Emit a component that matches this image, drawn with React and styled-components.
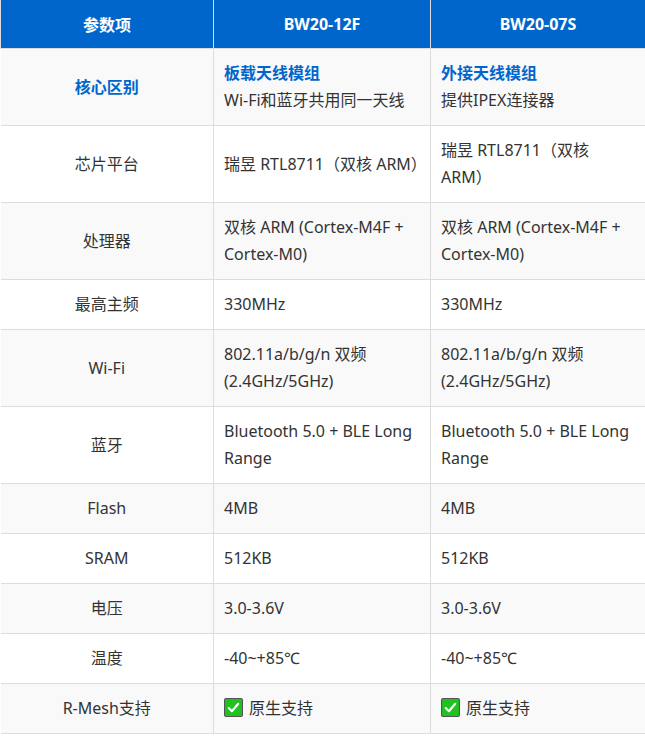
import React from "react";
import styled, { createGlobalStyle } from "styled-components";

const Global = createGlobalStyle`
  html, body { margin: 0; padding: 0; background: #fff; }
  body { font-family: "Noto Sans", "Noto Sans CJK SC", sans-serif; }
`;

const Table = styled.table`
  width: 645px;
  border-collapse: collapse;
  table-layout: fixed;
  font-size: 16px;
  color: #333;
`;
const Th = styled.th`
  background: #0066cc;
  color: #fff;
  font-weight: 700;
  font-size: 16px;
  height: 48px;
  padding: 0 12px;
  text-align: center;
  border: 1px solid #dddddd;
  border-top: none;
`;
const Tr = styled.tr`
  background: ${(p) => (p.$alt ? "#f9f9f9" : "#ffffff")};
`;
const Td = styled.td`
  border: 1px solid #dddddd;
  padding: 11px 10px;
  line-height: 27px;
  text-align: ${(p) => (p.$label ? "center" : "left")};
  vertical-align: middle;
  color: ${(p) => (p.$accent ? "#0066cc" : "#333")};
  font-weight: ${(p) => (p.$accent ? 700 : 400)};
  &:first-child { border-left: none; }
  &:last-child { border-right: none; }
`;
const Strong = styled.div`
  color: #0066cc;
  font-weight: 700;
`;
const Check = styled.span`
  display: inline-flex;
  width: 19px;
  height: 19px;
  vertical-align: -3px;
  margin-right: 6px;
`;

const CheckIcon = () => (
  <Check>
    <svg width="19" height="19" viewBox="0 0 18 18">
      <rect x="0.5" y="0.5" width="17" height="17" rx="1.5" fill="#1fc21f" stroke="#555" />
      <path d="M4.5 9.5 L7.5 12.5 L13.5 5.5" fill="none" stroke="#fff" strokeWidth="2" strokeLinecap="round" strokeLinejoin="round" />
    </svg>
  </Check>
);

const rows = [
  ["芯片平台", "瑞昱 RTL8711（双核 ARM）", "瑞昱 RTL8711（双核 ARM）"],
  ["处理器", "双核 ARM (Cortex-M4F + Cortex-M0)", "双核 ARM (Cortex-M4F + Cortex-M0)"],
  ["最高主频", "330MHz", "330MHz"],
  ["Wi-Fi", "802.11a/b/g/n 双频 (2.4GHz/5GHz)", "802.11a/b/g/n 双频 (2.4GHz/5GHz)"],
  ["蓝牙", "Bluetooth 5.0 + BLE Long Range", "Bluetooth 5.0 + BLE Long Range"],
  ["Flash", "4MB", "4MB"],
  ["SRAM", "512KB", "512KB"],
  ["电压", "3.0-3.6V", "3.0-3.6V"],
  ["温度", "-40~+85℃", "-40~+85℃"],
];

export default function App() {
  return (
    <>
      <Global />
      <Table>
        <colgroup>
          <col style={{ width: 213 }} />
          <col style={{ width: 217 }} />
          <col style={{ width: 215 }} />
        </colgroup>
        <thead>
          <tr>
            <Th>参数项</Th>
            <Th>BW20-12F</Th>
            <Th>BW20-07S</Th>
          </tr>
        </thead>
        <tbody>
          <Tr $alt>
            <Td $label $accent>核心区别</Td>
            <Td><Strong>板载天线模组</Strong>Wi-Fi和蓝牙共用同一天线</Td>
            <Td><Strong>外接天线模组</Strong>提供IPEX连接器</Td>
          </Tr>
          {rows.map((r, i) => (
            <Tr key={r[0]} $alt={i % 2 === 1}>
              <Td $label>{r[0]}</Td>
              <Td>{r[1]}</Td>
              <Td>{r[2]}</Td>
            </Tr>
          ))}
          <Tr $alt>
            <Td $label>R-Mesh支持</Td>
            <Td><CheckIcon />原生支持</Td>
            <Td><CheckIcon />原生支持</Td>
          </Tr>
        </tbody>
      </Table>
    </>
  );
}
